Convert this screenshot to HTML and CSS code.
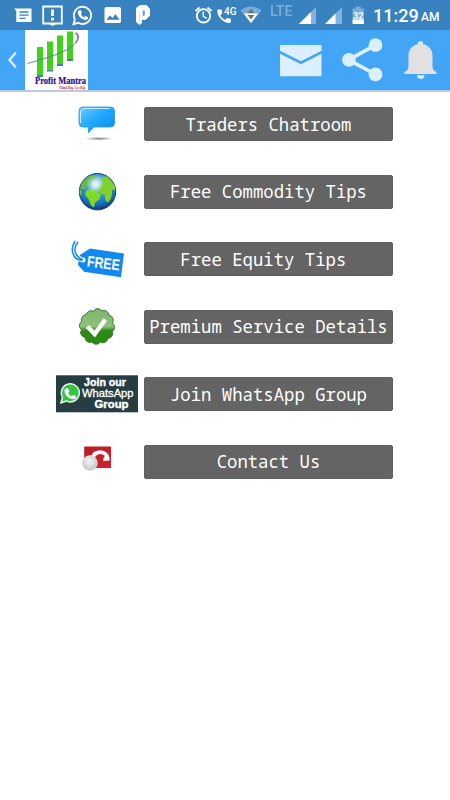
FILE: index.html
```
<!DOCTYPE html>
<html lang="en">
<head>
    <meta charset="UTF-8">
    <meta name="viewport" content="width=device-width, initial-scale=1.0">
    <title>Profit Mantra</title>
    <link rel="stylesheet" href="styles.css">
</head>
<body>
    <div class="status-bar">
        <div class="notifications">
            <svg width="30" height="30" viewBox="0 0 30 30">
                <path d="M6 8.500h17.500v13.500H8.300V11z" fill="#fff"/>
                <path d="M11.500 12h9M11.500 15.200h9M11.500 18.400h6" stroke="#3782bf" stroke-width="1.300"/>
            </svg>
            <svg width="30" height="30" viewBox="0 0 30 30">
                <path d="M5.200 6.500h18.600v17H5.200z" fill="none" stroke="#fff" stroke-width="1.800"/>
                <path d="M10 23.500h9l-4.500 2.500z" fill="#fff"/>
                <path d="M14.500 9.500v6.500M14.500 17.800v2.700" stroke="#fff" stroke-width="2.800"/>
            </svg>
            <svg width="30" height="30" viewBox="0 0 30 30">
                <path d="M5.500 24.200l1.400-4.800a8.600 8.600 0 1 1 3.300 3.400z" fill="none" stroke="#fff" stroke-width="1.800"/>
                <path d="M11.200 10.300l1.500-.2 1.200 2.900-1 1.200c.8 1.600 1.900 2.500 3.300 3.100l1.200-1.300 2.700 1.300c.2 1.700-1.300 2.700-2.800 2.600-4.100-.4-7.500-4.400-7.400-7.400 0-.9.500-1.700 1.300-2.200z" fill="#fff"/>
            </svg>
            <svg width="30" height="30" viewBox="0 0 30 30">
                <rect x="6.500" y="7" width="16.500" height="16" rx="1.800" fill="#fff"/>
                <path d="M8.500 19.800l3.500-4.600 2.500 2.900 3-4.200 4 5.900z" fill="#3782bf"/>
            </svg>
            <svg width="30" height="30" viewBox="0 0 30 30">
                <path d="M8 8l4-3h6.500L22 9v6.500L17.500 20H14v3l-2.500 2L8 22z" fill="#fff"/>
                <path d="M14.800 10.500h2v4.500l-2 1.500z" fill="#5b9bd0"/>
                <path d="M11.500 12v10" stroke="#c4dcf0" stroke-width=".7"/>
            </svg>
        </div>
        <div class="system">
            <svg width="20" height="30" viewBox="0 0 20 30">
                <circle cx="9.500" cy="15.800" r="6.700" fill="none" stroke="#fff" stroke-width="1.800"/>
                <path d="M1.500 11l4-3.500M17.500 11l-4-3.500" stroke="#fff" stroke-width="1.800"/>
                <path d="M9.300 11.500v4.800l3.500 2" fill="none" stroke="#fff" stroke-width="1.400"/>
            </svg>
            <svg width="26" height="30" viewBox="0 0 26 30">
                <path d="M4.500 9.500h3l.8 3.700-2 2c1.200 2.300 2.600 3.600 4.800 4.800l2-2 3.700.8v3c0 .7-.5 1.200-1.300 1.200C9.500 23 3.500 17.500 3.300 10.800c0-.8.500-1.300 1.200-1.300z" fill="#fff"/>
                <text x="10" y="14.800" class="badge-4g">4G</text>
            </svg>
            <svg width="24" height="30" viewBox="0 0 24 30">
                <path d="M0.500 10.500Q11 2.500 21.500 10.500L11 23.500z" fill="#79add9"/>
                <path d="M4 13.500h14l-7 9.500z" fill="#fff"/>
                <path d="M7.500 13l3.500-4.500 3.500 4.500zM7.500 15h7L11 19.500z" fill="#6d7479"/>
            </svg>
            <span class="lte">LTE</span>
            <svg class="signal" width="18" height="30" viewBox="0 0 18 30">
                <path d="M0 24L17 7v17z" fill="#82b3dc"/>
                <path d="M0 24l12-12v12z" fill="#fff"/>
            </svg>
            <svg class="signal" width="18" height="30" viewBox="0 0 18 30">
                <path d="M0 24L17 7v17z" fill="#82b3dc"/>
                <path d="M0 24l10.500-10.500V24z" fill="#fff"/>
            </svg>
            <svg class="battery" width="13" height="30" viewBox="0 0 13 30">
                <path d="M1.500 8.500h3v-2h5.500v2h3V20H1.500z" fill="#79add9"/>
                <path d="M1.500 19.500H13V24H1.500z" fill="#fff"/>
                <text x="7.200" y="18.600" class="battery-level">32</text>
            </svg>
            <span class="clock">11:29</span>
            <span class="meridiem">AM</span>
        </div>
    </div>

    <div class="toolbar">
        <svg class="back" width="25" height="60" viewBox="0 0 25 60">
            <path d="M15.800 22.500L9.500 30l6.300 7.500" fill="none" stroke="#d6ecfd" stroke-width="2.300"/>
        </svg>
        <svg class="logo" width="63" height="60" viewBox="0 0 63 60">
            <g fill="#42d11d">
                <path d="M12 17h6v28h-6zM22 11.500h6v28h-6zM32 5.500h6V34h-6zM42 1.500h6V29h-6z"/>
            </g>
            <path d="M12 45h6v2h-6zM22 39.500h6v2h-6zM32 34h6v2h-6zM42 29h6v2h-6z" fill="#4b78c4"/>
            <path d="M2.500 33.500C22 28 43 22 50.500 13" fill="none" stroke="#5b75ac" stroke-width=".9"/>
            <path d="M50.500 13c3.500-4 3.500-8 0-10" fill="none" stroke="#7275c9" stroke-width="1.700"/>
            <text x="10" y="54" textLength="51" lengthAdjust="spacingAndGlyphs" class="brand">Profit Mantra</text>
            <text x="34" y="58.700" textLength="26" lengthAdjust="spacingAndGlyphs" class="slogan">Think Big, Get Big</text>
        </svg>
        <div class="actions">
            <svg width="42" height="60" viewBox="0 0 42 60">
                <path d="M0 15h41.500v5.800L21 31.200 0 20.800z" fill="#dcefff"/>
                <path d="M0 23.800l21 10.500 20.500-10.500v22.400H0z" fill="#dcefff"/>
            </svg>
            <svg width="42" height="60" viewBox="0 0 42 60">
                <path d="M33.500 15.200l-27 14.600 27 14.500" fill="none" stroke="#dcefff" stroke-width="3.800"/>
                <g fill="#dcefff">
                    <circle cx="33.500" cy="15.200" r="6.900"/>
                    <circle cx="6.900" cy="29.800" r="6.900"/>
                    <circle cx="33.500" cy="44.300" r="6.900"/>
                </g>
            </svg>
            <svg width="33" height="60" viewBox="0 0 33 60">
                <path d="M16.500 11c1.900 0 2.900 1.400 2.700 3.300 6 1.300 9.300 5.500 9.300 11.500v10c0 3.400 1.200 5 4 6.300V44H.5v-1.900c2.800-1.300 4-2.900 4-6.300v-10c0-6 3.300-10.200 9.300-11.500-.2-1.900.8-3.300 2.700-3.300z" fill="#e1e1e2"/>
                <path d="M12.800 45.300h7.800c-.5 5-7.300 5-7.800 0z" fill="#dcefff"/>
            </svg>
        </div>
    </div>

    <div class="menu">
        <div class="item">
            <svg width="82" height="40" viewBox="0 0 82 40">
                <defs>
                    <linearGradient id="bubble" x1="0" y1="0" x2="1" y2="1">
                        <stop offset="0" stop-color="#6fceff"/>
                        <stop offset=".45" stop-color="#22a9ff"/>
                        <stop offset="1" stop-color="#0787e8"/>
                    </linearGradient>
                    <radialGradient id="shade">
                        <stop offset="0" stop-color="#888"/>
                        <stop offset="1" stop-color="#fff"/>
                    </radialGradient>
                </defs>
                <ellipse cx="43" cy="34.700" rx="14" ry="2" fill="url(#shade)"/>
                <path d="M27 3h27.500q4 0 4 4v12q0 4-4 4H38l-5.500 5.800V23H27q-4 0-4-4V7q0-4 4-4z" fill="url(#bubble)" stroke="#2496dc" stroke-width=".8"/>
                <path d="M24.500 19V8q0-3.500 3.500-3.500h26" fill="none" stroke="#c2ecff" stroke-width="1"/>
            </svg>
            <button class="link">Traders Chatroom</button>
        </div>
        <div class="item">
            <svg width="82" height="40" viewBox="0 0 82 40">
                <defs>
                    <radialGradient id="ocean" cx=".48" cy=".3" r=".68">
                        <stop offset="0" stop-color="#bfe9fa"/>
                        <stop offset=".35" stop-color="#4ba6dc"/>
                        <stop offset=".8" stop-color="#176fb9"/>
                        <stop offset="1" stop-color="#103a83"/>
                    </radialGradient>
                    <radialGradient id="glow">
                        <stop offset="0" stop-color="#fff" stop-opacity=".75"/>
                        <stop offset="1" stop-color="#fff" stop-opacity="0"/>
                    </radialGradient>
                </defs>
                <circle cx="41.500" cy="19.700" r="18.200" fill="url(#ocean)" stroke="#173e82" stroke-width="1"/>
                <path d="M25 13c2-5 6-8 11-9.500l5 1-2 3-3 1-1 3-4 2-1 3-3 1-3-1z" fill="#65b84e"/>
                <path d="M29.500 20l2.500-2.500 6 .5 3 2 4 2.500-2 5-4 3-1 5-3-2-2-6-3.500-4z" fill="#7fdc25"/>
                <path d="M46 5l5-.5 5 5 3 5v4l-3-1v4l-1 5-3 4-2.500-2-1-6-4-1-2.500-3 2-5 3-1.500-1-3z" fill="#7ed22a"/>
                <path d="M23.700 16.500l2 3-.5 5-1.500-3z" fill="#72c944"/>
                <circle cx="39" cy="12" r="9" fill="url(#glow)"/>
            </svg>
            <button class="link">Free Commodity Tips</button>
        </div>
        <div class="item">
            <svg width="82" height="40" viewBox="0 0 82 40">
                <path d="M34 9.500L68 14.500 65 38.300l-37-5.500-6-7 1.500-9.500z" fill="#1389ed"/>
                <circle cx="27" cy="21" r="2.500" fill="#fff"/>
                <path d="M27 21c-9 1-14-9-8-19M27 21c-8-4-11-11-5-18" fill="none" stroke="#fff" stroke-width="3.500"/>
                <path d="M27 21c-9 1-14-9-8-19M27 21c-8-4-11-11-5-18" fill="none" stroke="#1389ed" stroke-width="1.500"/>
                <text x="30.500" y="27.500" transform="rotate(7 30.500 27.500)" textLength="33" lengthAdjust="spacingAndGlyphs" class="free">FREE</text>
            </svg>
            <button class="link">Free Equity Tips </button>
        </div>
        <div class="item">
            <svg width="82" height="40" viewBox="0 0 82 40">
                <defs>
                    <linearGradient id="seal" x1="0" y1="0" x2="0" y2="1">
                        <stop offset="0" stop-color="#7fb36b"/>
                        <stop offset=".5" stop-color="#8cc279"/>
                        <stop offset=".62" stop-color="#2c8b14"/>
                        <stop offset="1" stop-color="#2a8b13"/>
                    </linearGradient>
                </defs>
                <path d="M41 1.500q3 0 4.500 2.200 3-1.100 5.400.7 1.900 1.300 2.100 3.700 3 .8 4 3.500.8 2.300-.6 4.400 2.400 1.900 2.100 4.600-.1 2.300-2.100 3.800 1 2.900-.7 5.100-1.400 1.700-3.800 2-.6 2.900-3.200 4-2.200.9-4.400-.4-1.700 2.400-4.500 2.200-2.300-.2-3.800-2.200-2.900 1.100-5.200-.8-1.700-1.500-1.900-3.900-2.900-.6-4-3.300-.8-2.200.6-4.300-2.300-1.900-2.100-4.600.3-2.300 2.200-3.700-.9-2.900 1-5.100 1.500-1.600 3.700-1.800.7-2.900 3.500-3.700 2.200-.6 4.100.4 1.200-2.800 3.500-2.800z" fill="url(#seal)" stroke="#2f6e25" stroke-width=".9"/>
                <path d="M31.500 19.500l7.200 7.500 10.600-14.500" fill="none" stroke="#fff" stroke-width="4.400"/>
            </svg>
            <button class="link">Premium Service Details</button>
        </div>
        <div class="item">
            <svg width="82" height="40" viewBox="0 0 82 40">
                <rect y="1.300" width="82" height="37" fill="#263d41"/>
                <path d="M5 28.800l1.500-5.500A9 9 0 1 1 10.500 27z" fill="#35c541" stroke="#e9fbe9" stroke-width="1.500"/>
                <path d="M9.800 14.500l2-.5 1.600 3.400-1.200 1.500c1 1.800 2.100 2.600 3.600 3.300l1.500-1.500 3 1.500c.2 2-1.600 3.100-3.400 3-4.600-.5-8.500-4.700-8.400-8.400 0-.9.500-1.700 1.300-2.300z" fill="#fff"/>
                <text x="28" y="11.500" textLength="42" lengthAdjust="spacingAndGlyphs" class="join">Join our</text>
                <text x="26" y="22.500" textLength="51.500" lengthAdjust="spacingAndGlyphs" class="whatsapp">WhatsApp</text>
                <text x="38.500" y="33.500" textLength="34" lengthAdjust="spacingAndGlyphs" class="join">Group</text>
            </svg>
            <button class="link">Join WhatsApp Group</button>
        </div>
        <div class="item">
            <svg width="82" height="40" viewBox="0 0 82 40">
                <defs>
                    <linearGradient id="red" x1="0" y1="0" x2="1" y2="1">
                        <stop offset="0" stop-color="#b51f28"/>
                        <stop offset="1" stop-color="#cf202d"/>
                    </linearGradient>
                    <radialGradient id="ball" cx=".45" cy=".35">
                        <stop offset="0" stop-color="#f3f3f3"/>
                        <stop offset="1" stop-color="#cdcdcd"/>
                    </radialGradient>
                </defs>
                <rect x="28.200" y="4.500" width="26.800" height="21.500" fill="url(#red)"/>
                <path d="M35 15C36 10 40 8 45 8.500c5.500.5 9 4 8.500 10l-6 .5c-.5-2 0-4 1.500-5-3.500-3.500-9-2.500-10.500 2.500z" fill="#fff"/>
                <circle cx="34" cy="21" r="7.800" fill="url(#ball)"/>
                <path d="M30 18h8M29.500 22h9M32.500 16v10M36 16v10" stroke="#fff" stroke-width=".8" opacity=".3"/>
            </svg>
            <button class="link">Contact Us</button>
        </div>
    </div>
</body>
</html>
```
FILE: styles.css
```
body {
    font-family: Roboto, sans-serif;
    background-color: #fff;
    margin: 0;
    padding: 0;
}

svg {
    display: block;
    flex-shrink: 0;
}

.status-bar {
    display: flex;
    justify-content: space-between;
    height: 30px;
    padding-left: 8px;
    box-sizing: border-box;
    background-color: #3782bf;
    color: #fff;
}

.notifications {
    display: flex;
}

.system {
    display: flex;
    width: 256px;
    line-height: 32px;
    white-space: nowrap;
}

.badge-4g {
    font-size: 10px;
    font-weight: 500;
    fill: #fff;
}

.lte {
    width: 35px;
    box-sizing: border-box;
    padding-left: 6px;
    font-size: 14px;
    font-weight: 500;
    line-height: 23px;
    color: #79add9;
}

.signal {
    margin-right: 8px;
}

.battery {
    margin-right: 9px;
}

.battery-level {
    font-size: 9px;
    font-weight: bold;
    text-anchor: middle;
    fill: #fff;
}

.clock {
    width: 48px;
    font-size: 18px;
    font-weight: 500;
}

.meridiem {
    font-size: 12px;
    font-weight: 500;
    line-height: 35px;
}

.toolbar {
    display: flex;
    height: 60px;
    background-color: #42a5f5;
    border-bottom: 2px solid #b9ccdc;
}

.logo {
    background-color: #fff;
    overflow: visible;
}

.brand {
    font-family: "Liberation Serif", serif;
    font-size: 9.5px;
    font-weight: bold;
    fill: #24109a;
    stroke: #24109a;
    stroke-width: .2px;
}

.slogan {
    font-family: "Liberation Serif", serif;
    font-size: 4px;
    font-weight: bold;
    fill: #d5163c;
}

.actions {
    display: flex;
    gap: 20px;
    margin-left: auto;
    padding-right: 13.5px;
}

.menu {
    display: flex;
    flex-direction: column;
    gap: 27.5px;
    padding: 12px 0 0 56px;
}

.item {
    display: flex;
    align-items: center;
    gap: 6px;
    height: 40px;
}

.link {
    width: 249px;
    height: 34px;
    padding: 0;
    border: 1px solid #606060;
    border-radius: 2px;
    background-color: #646464;
    color: #fff;
    font-family: "Noto Sans Mono", "DejaVu Sans Mono", monospace;
    font-size: 17.3px;
    white-space: pre;
    cursor: pointer;
}

.free {
    font-family: "Liberation Sans", sans-serif;
    font-size: 15.5px;
    font-weight: bold;
    fill: #fff;
}

.join {
    font-family: "Liberation Sans", sans-serif;
    font-size: 10.5px;
    font-weight: bold;
    fill: #fff;
    stroke: #fff;
    stroke-width: .4px;
}

.whatsapp {
    font-family: "Liberation Sans", sans-serif;
    font-size: 10.5px;
    fill: #fff;
    stroke: #fff;
    stroke-width: .3px;
}
```
